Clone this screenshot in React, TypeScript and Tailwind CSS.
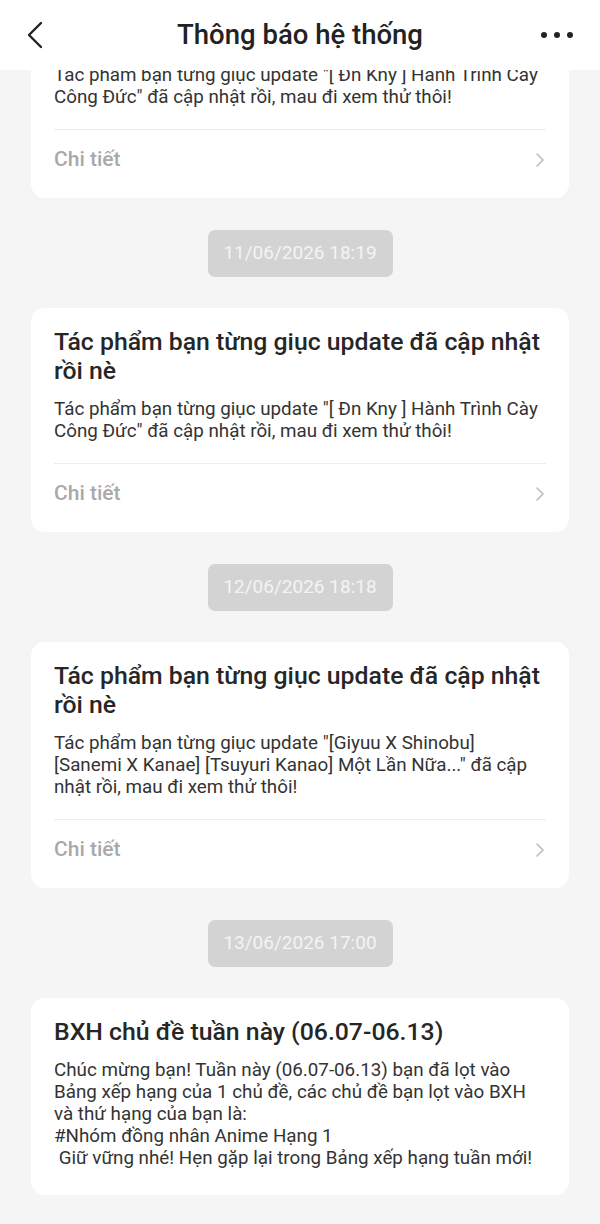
import React from 'react';

interface Notice {
    id: number;
    time?: string;
    title: string;
    body: string;
    hasDetail: boolean;
}

const notices: Notice[] = [
    {
        id: 1,
        title: 'Tác phẩm bạn từng giục update đã cập nhật\nrồi nè',
        body: 'Tác phẩm bạn từng giục update "[ Đn Kny ] Hành Trình Cày\nCông Đức" đã cập nhật rồi, mau đi xem thử thôi!',
        hasDetail: true,
    },
    {
        id: 2,
        time: '11/06/2026 18:19',
        title: 'Tác phẩm bạn từng giục update đã cập nhật\nrồi nè',
        body: 'Tác phẩm bạn từng giục update "[ Đn Kny ] Hành Trình Cày\nCông Đức" đã cập nhật rồi, mau đi xem thử thôi!',
        hasDetail: true,
    },
    {
        id: 3,
        time: '12/06/2026 18:18',
        title: 'Tác phẩm bạn từng giục update đã cập nhật\nrồi nè',
        body: 'Tác phẩm bạn từng giục update "[Giyuu X Shinobu]\n[Sanemi X Kanae] [Tsuyuri Kanao] Một Lần Nữa..." đã cập\nnhật rồi, mau đi xem thử thôi!',
        hasDetail: true,
    },
    {
        id: 4,
        time: '13/06/2026 17:00',
        title: 'BXH chủ đề tuần này (06.07-06.13)',
        body: 'Chúc mừng bạn! Tuần này (06.07-06.13) bạn đã lọt vào\nBảng xếp hạng của 1 chủ đề, các chủ đề bạn lọt vào BXH\nvà thứ hạng của bạn là:\n#Nhóm đồng nhân Anime Hạng 1\n Giữ vững nhé! Hẹn gặp lại trong Bảng xếp hạng tuần mới!',
        hasDetail: false,
    },
];

function NoticeCard({ notice }: { notice: Notice }) {
    return (
        <div className={`bg-white rounded-[14px] px-[23px] pt-[19px] ${notice.hasDetail ? 'pb-[8px]' : 'pb-[26px]'}`}>
            <h2 className="text-[24.8px] leading-[29px] font-medium text-[#262626] whitespace-pre-wrap">{notice.title}</h2>
            <p className="mt-[13px] text-[18.8px] leading-[22px] text-[#333333] whitespace-pre-wrap">{notice.body}</p>
            {notice.hasDetail && (
                <>
                    <div className="mt-[21px] h-px bg-[#ececec]" />
                    <div className="h-[60px] flex items-center justify-between">
                        <span className="text-[21px] font-medium text-[#a9a9a9]">Chi tiết</span>
                        <svg width="10" height="16" viewBox="0 0 10 16" fill="none" className="mr-[1px]">
                            <path d="M2 2l6 6-6 6" stroke="#bdbdbd" strokeWidth="1.6" strokeLinecap="round" strokeLinejoin="round" />
                        </svg>
                    </div>
                </>
            )}
        </div>
    );
}

export default function App() {
    return (
        <div className="w-[600px] h-[1224px] flex flex-col bg-[#f5f5f5] overflow-hidden" style={{ fontFamily: 'Roboto, "Noto Sans", sans-serif' }}>
            {/* Header */}
            <div className="h-[70px] shrink-0 bg-white flex items-center justify-between px-[26px] relative z-10">
                <div className="w-[48px] flex items-center">
                    <svg width="18" height="28" viewBox="0 0 18 28" fill="none">
                        <path d="M15 2L3 14l12 12" stroke="#222" strokeWidth="2.4" strokeLinecap="round" strokeLinejoin="round" />
                    </svg>
                </div>
                <h1 className="text-[27.5px] font-medium text-[#222222]">Thông báo hệ thống</h1>
                <div className="w-[48px] flex items-center justify-end gap-[7.5px] pr-[1px]">
                    <span className="w-[5.5px] h-[5.5px] rounded-full bg-[#222]" />
                    <span className="w-[5.5px] h-[5.5px] rounded-full bg-[#222]" />
                    <span className="w-[5.5px] h-[5.5px] rounded-full bg-[#222]" />
                </div>
            </div>

            {/* List */}
            <div className="flex-1 overflow-hidden">
                <div className="-mt-[96px] px-[31px] flex flex-col">
                    {notices.map((n) => (
                        <div key={n.id} className="flex flex-col">
                            {n.time && (
                                <div className="flex justify-center mt-[32px] mb-[31px]">
                                    <div className="w-[185px] h-[47px] rounded-[7px] bg-[#d3d3d3] flex items-center justify-center text-[19px] text-[#f4f4f4]">
                                        {n.time}
                                    </div>
                                </div>
                            )}
                            <NoticeCard notice={n} />
                        </div>
                    ))}
                </div>
            </div>
        </div>
    );
}
